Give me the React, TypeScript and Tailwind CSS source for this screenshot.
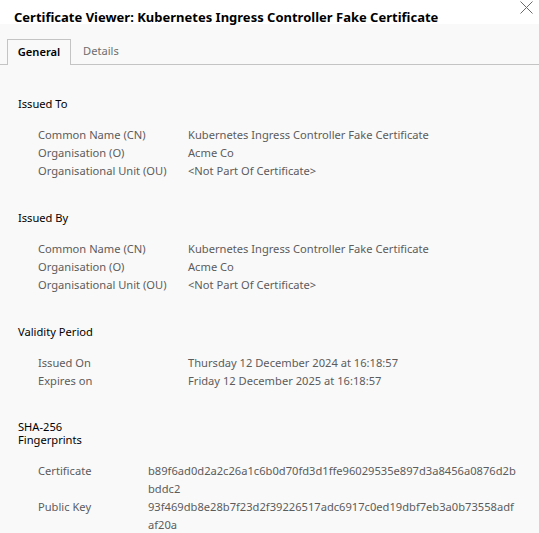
import React from 'react';

const font = { fontFamily: '"Segoe UI", "Noto Sans", sans-serif' };

function Row({ label, value, wide }: { label: string; value: React.ReactNode; wide?: boolean }) {
  return (
    <div className="flex leading-[18px]">
      <div className={wide ? 'w-[110px] shrink-0' : 'w-[150px] shrink-0'}>{label}</div>
      <div>{value}</div>
    </div>
  );
}

function Section({ title, children }: { title: React.ReactNode; children: React.ReactNode }) {
  return (
    <div className="mb-[29px]">
      <div className="text-black leading-[18px] mb-[13px]">{title}</div>
      <div className="pl-[20px] text-[#5c5c5c]">{children}</div>
    </div>
  );
}

export default function App() {
  return (
    <div className="w-[539px] h-[533px] overflow-hidden bg-[#f9f9f9] text-[11.15px]" style={font}>
      <div className="h-[24px] bg-white flex items-start justify-between pl-[14px] pr-[6px]">
        <h1 className="text-[13px] font-bold text-black leading-[18px] mt-[8px] relative z-10">
          Certificate Viewer: Kubernetes Ingress Controller Fake Certificate
        </h1>
        <svg width="13" height="13" viewBox="0 0 13 13" className="mt-[1px]">
          <path d="M0.5 0.5 L12.5 12.5 M12.5 0.5 L0.5 12.5" stroke="#6b6b6b" strokeWidth="1" />
        </svg>
      </div>

      <div className="mt-[15px] flex items-end border-b border-[#c4c4c4] h-[26px] pl-[7px]">
        <div className="h-[26px] w-[64px] border border-b-0 border-[#c4c4c4] bg-[#f9f9f9] flex items-center justify-center text-black font-semibold -mb-px">
          General
        </div>
        <div className="h-[26px] px-[12px] flex items-center text-[#6e6e6e]">Details</div>
      </div>

      <div className="pl-[18px] pt-[30px]">
        <Section title="Issued To">
          <Row label="Common Name (CN)" value="Kubernetes Ingress Controller Fake Certificate" />
          <Row label="Organisation (O)" value="Acme Co" />
          <Row label="Organisational Unit (OU)" value="<Not Part Of Certificate>" />
        </Section>
        <Section title="Issued By">
          <Row label="Common Name (CN)" value="Kubernetes Ingress Controller Fake Certificate" />
          <Row label="Organisation (O)" value="Acme Co" />
          <Row label="Organisational Unit (OU)" value="<Not Part Of Certificate>" />
        </Section>
        <Section title="Validity Period">
          <Row label="Issued On" value="Thursday 12 December 2024 at 16:18:57" />
          <Row label="Expires on" value="Friday 12 December 2025 at 16:18:57" />
        </Section>
        <div>
          <div className="text-black leading-[13px] mb-[16px] pt-[1px]">
            SHA-256
            <br />
            Fingerprints
          </div>
          <div className="pl-[20px] text-[#5c5c5c]">
            <Row
              wide
              label="Certificate"
              value={
                <>
                  b89f6ad0d2a2c26a1c6b0d70fd3d1ffe96029535e897d3a8456a0876d2b
                  <br />
                  bddc2
                </>
              }
            />
            <Row
              wide
              label="Public Key"
              value={
                <>
                  93f469db8e28b7f23d2f39226517adc6917c0ed19dbf7eb3a0b73558adf
                  <br />
                  af20a
                </>
              }
            />
          </div>
        </div>
      </div>
    </div>
  );
}
